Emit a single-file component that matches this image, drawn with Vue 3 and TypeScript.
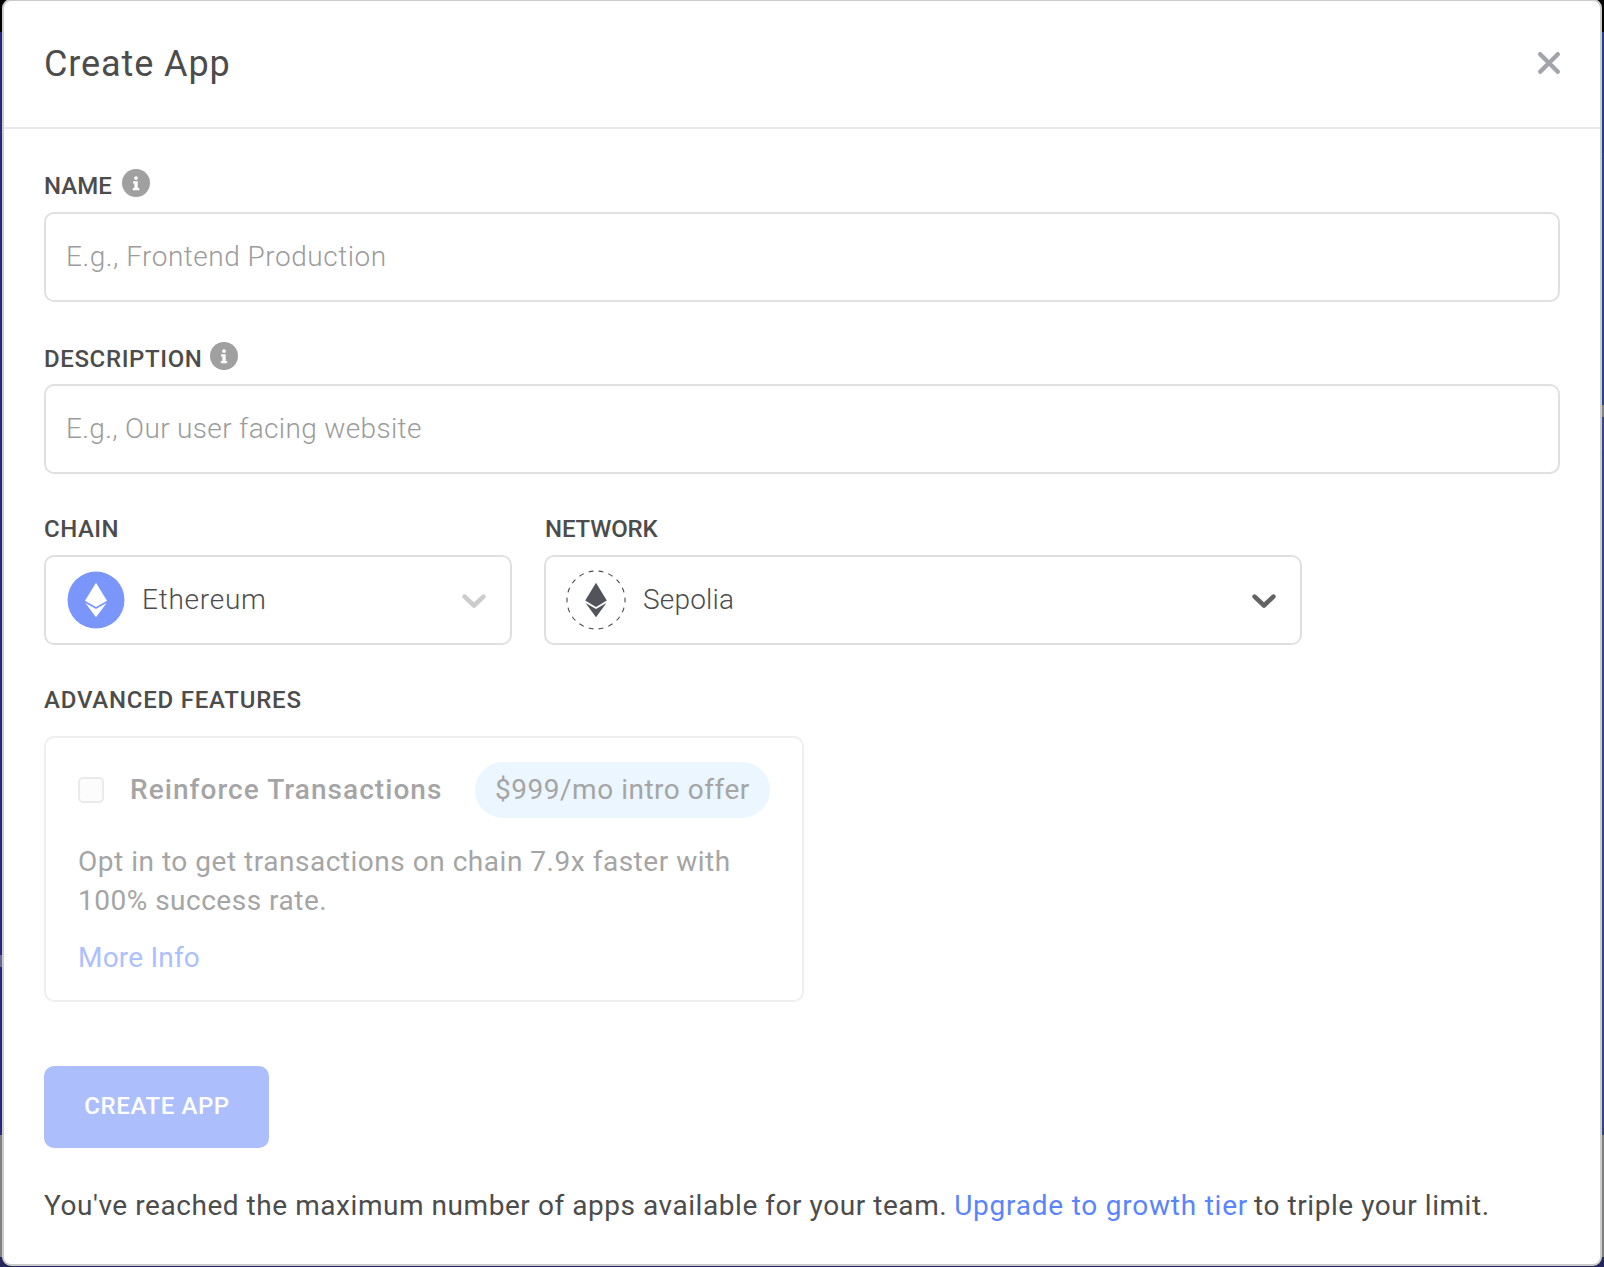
<script setup lang="ts">
import { ref } from 'vue'

interface TextField {
  id: string
  label: string
  placeholder: string
}

const fields: TextField[] = [
  { id: 'name', label: 'NAME', placeholder: 'E.g., Frontend Production' },
  { id: 'description', label: 'DESCRIPTION', placeholder: 'E.g., Our user facing website' },
]

const values = ref<Record<string, string>>({ name: '', description: '' })
</script>

<template>
  <div class="page">
    <div class="edge edge-left"></div>
    <main class="modal">
      <header class="header">
        <h1 class="title">Create App</h1>
        <button class="close" type="button" aria-label="Close">
          <svg width="24" height="24" viewBox="0 0 24 24">
            <path d="M3.2 3.2 20.8 20.8M20.8 3.2 3.2 20.8" fill="none" stroke="#a3a3ac" stroke-width="4.4" stroke-linecap="round" />
          </svg>
        </button>
      </header>

      <form class="body" @submit.prevent>
        <div v-for="f in fields" :key="f.id" class="field" :class="f.id">
          <label class="label" :for="f.id">
            <span class="label-text">{{ f.label }}</span>
            <svg class="info" width="28" height="28" viewBox="0 0 28 28">
              <circle cx="14" cy="14" r="14" fill="#a0a0a0" />
              <circle cx="14" cy="9.1" r="1.9" fill="#fff" />
              <path d="M11 12.2h4.7v6.7h1.5v2.3h-6.4v-2.3h1.6v-4.4H11z" fill="#fff" />
            </svg>
          </label>
          <input :id="f.id" v-model="values[f.id]" class="input" type="text" :placeholder="f.placeholder" />
        </div>

        <div class="selects">
          <div class="chain">
            <div class="label-plain chain-label">CHAIN</div>
            <div class="select">
              <svg class="coin" width="60" height="60" viewBox="0 0 60 60">
                <circle cx="30" cy="30" r="28.5" fill="#7b96fb" />
                <path d="M30 12.7 41 30.8 30 37 19 30.8z" fill="#fff" />
                <path d="M19.4 33.1 30 39 40.6 33.1 30 47.3z" fill="#fff" />
              </svg>
              <span class="value ethereum">Ethereum</span>
              <svg class="chevron" width="24" height="16" viewBox="0 0 24 16">
                <path d="M2.6 3.6 12 12.5 21.4 3.6" fill="none" stroke="#cccccc" stroke-width="4.6" stroke-linecap="round" stroke-linejoin="round" />
              </svg>
            </div>
          </div>
          <div class="network">
            <div class="label-plain network-label">NETWORK</div>
            <div class="select">
              <svg class="coin" width="60" height="60" viewBox="0 0 60 60">
                <circle cx="30" cy="30" r="29" fill="none" stroke="#4b4b50" stroke-width="1.1" pathLength="180" stroke-dasharray="4.8 5.2" stroke-dashoffset="2.4" />
                <path d="M30 12.8 40.8 30.6 30 36.9 19.2 30.6z" fill="#53545b" />
                <path d="M19.6 32.9 30 38.9 40.4 32.9 30 47.2z" fill="#53545b" />
              </svg>
              <span class="value sepolia">Sepolia</span>
              <svg class="chevron" width="24" height="16" viewBox="0 0 24 16">
                <path d="M2.6 3.6 12 12.5 21.4 3.6" fill="none" stroke="#636363" stroke-width="4.6" stroke-linecap="round" stroke-linejoin="round" />
              </svg>
            </div>
          </div>
        </div>

        <div class="advanced-label">ADVANCED FEATURES</div>
        <section class="card">
          <div class="card-head">
            <span class="checkbox"></span>
            <span class="card-title">Reinforce Transactions</span>
            <span class="pill">$999/mo intro offer</span>
          </div>
          <p class="card-text">
            Opt in to get transactions on chain 7.9x faster with<br /><span class="rate">100% success rate.</span>
          </p>
          <a class="more">More Info</a>
        </section>

        <button class="submit" type="submit" disabled>CREATE APP</button>

        <p class="message">
          <span>You've reached the maximum number of apps available for your team.</span>
          <a class="upgrade">Upgrade to growth tier</a>
          <span>to triple your limit.</span>
        </p>
      </form>
    </main>
    <div class="edge edge-right"></div>
  </div>
</template>

<style>
body {
  background: #25275c;
  overflow: hidden;
}
</style>

<style scoped>
.page {
  box-sizing: border-box;
  display: flex;
  width: 1604px;
  height: 1267px;
  overflow: hidden;
  background: linear-gradient(#000 0 32px, #27287f 32px 1135px, #808080 1135px 1257px, #25275c 1257px);
  font-family: Roboto, 'Liberation Sans', sans-serif;
  color: #4c4c4c;
}
.edge {
  width: 2px;
  flex: none;
}
.edge-left {
  background: linear-gradient(transparent 955px, #67679a 955px 967px, transparent 967px);
}
.edge-right {
  background: linear-gradient(#000 0 32px, #1f4182 32px 153px, #24468a 153px 405px, #7f8187 405px 417px, #33488a 417px 450px, #2c4684 450px 1135px, #808080 1135px 1257px, #25275c 1257px);
}
.modal {
  box-sizing: border-box;
  flex: none;
  width: 1600px;
  height: 1267px;
  margin-top: -1px;
  border: 2px solid #cbcbcb;
  border-radius: 9px;
  background: #fff;
}
.header {
  box-sizing: border-box;
  display: flex;
  align-items: center;
  justify-content: space-between;
  height: 128px;
  padding: 0 39px 2px 40px;
  border-bottom: 2px solid #e9e9ed;
}
.title {
  margin: 2px 0 0;
  font-size: 36px;
  font-weight: 400;
  letter-spacing: 0.9px;
}
.close {
  display: flex;
  padding: 0;
  border: 0;
  background: none;
}
.body {
  display: flex;
  flex-direction: column;
  padding: 40px 40px 0;
}
.label {
  display: flex;
  height: 43px;
}
.description .label {
  height: 42px;
}
.label-text {
  padding-top: 3px;
  line-height: 28px;
  font-size: 24px;
  font-weight: 500;
}
.name .info {
  margin-left: 10px;
}
.description .label-text {
  letter-spacing: 0.62px;
}
.description .info {
  margin-left: 8px;
}
.input {
  box-sizing: border-box;
  display: block;
  width: 1516px;
  height: 90px;
  padding: 0 20px 2px;
  border: 2px solid #e0e0e0;
  border-radius: 10px;
  outline: 0;
  font: 300 28px Roboto, 'Liberation Sans', sans-serif;
  letter-spacing: 0.51px;
}
.description .input {
  letter-spacing: 0.34px;
}
.input::placeholder {
  color: #9b9b9b;
  opacity: 1;
}
.field {
  margin-bottom: 40px;
}
.field + .field {
  margin-bottom: 41px;
}
.selects {
  display: flex;
  gap: 32px;
}
.label-plain {
  height: 40px;
  line-height: 28px;
  font-size: 24px;
  font-weight: 500;
}
.chain-label {
  letter-spacing: 0.5px;
}
.network-label {
  padding-left: 1px;
  letter-spacing: -0.15px;
}
.chain {
  width: 468px;
}
.network {
  width: 758px;
}
.select {
  box-sizing: border-box;
  display: flex;
  align-items: center;
  height: 90px;
  padding: 0 24px 0 20px;
  border: 2px solid #e0e0e0;
  border-radius: 10px;
}
.value {
  flex: 1;
  margin-left: 16px;
  padding-bottom: 2px;
  font-size: 28px;
  font-weight: 300;
}
.ethereum {
  letter-spacing: 0.75px;
}
.sepolia {
  padding-left: 1px;
  letter-spacing: 0.2px;
}
.chevron {
  margin-top: 2px;
}
.advanced-label {
  margin-top: 41px;
  height: 50px;
  line-height: 28px;
  font-size: 24px;
  font-weight: 500;
  letter-spacing: 0.78px;
}
.card {
  box-sizing: border-box;
  width: 760px;
  height: 266px;
  padding: 24px 32px;
  border: 2px solid #efefef;
  border-radius: 10px;
  color: #a5a5a5;
  font-size: 28px;
}
.card-head {
  display: flex;
  align-items: center;
  height: 56px;
}
.checkbox {
  box-sizing: border-box;
  width: 26px;
  height: 26px;
  border: 2px solid #eaeaea;
  border-radius: 5px;
  background: #fcfcfc;
}
.card-title {
  width: 345px;
  margin-left: 26px;
  padding-bottom: 2px;
  font-weight: 500;
  letter-spacing: 1.05px;
  white-space: nowrap;
}
.pill {
  box-sizing: border-box;
  width: 295px;
  height: 56px;
  padding-left: 20px;
  border-radius: 28px;
  background: #ebf6ff;
  line-height: 56px;
  letter-spacing: 0.52px;
  white-space: nowrap;
}
.card-text {
  margin: 24px 0 18px;
  line-height: 39px;
  letter-spacing: 0.52px;
  white-space: nowrap;
}
.rate {
  letter-spacing: 0.5px;
}
.more {
  display: block;
  line-height: 39px;
  color: #acc0fd;
  letter-spacing: 0.2px;
}
.submit {
  width: 225px;
  height: 82px;
  margin-top: 64px;
  padding: 0 0 2px 1px;
  border: 0;
  border-radius: 10px;
  background: #acbffc;
  color: #fff;
  font: 500 24px Roboto, 'Liberation Sans', sans-serif;
  letter-spacing: 0.6px;
}
.message {
  display: flex;
  margin: 38px 0 0;
  font-size: 28px;
  line-height: 39px;
  letter-spacing: 0.55px;
  white-space: nowrap;
}
.upgrade {
  margin: 0 6px 0 7px;
  color: #5a84fc;
  letter-spacing: 0.77px;
}
</style>
